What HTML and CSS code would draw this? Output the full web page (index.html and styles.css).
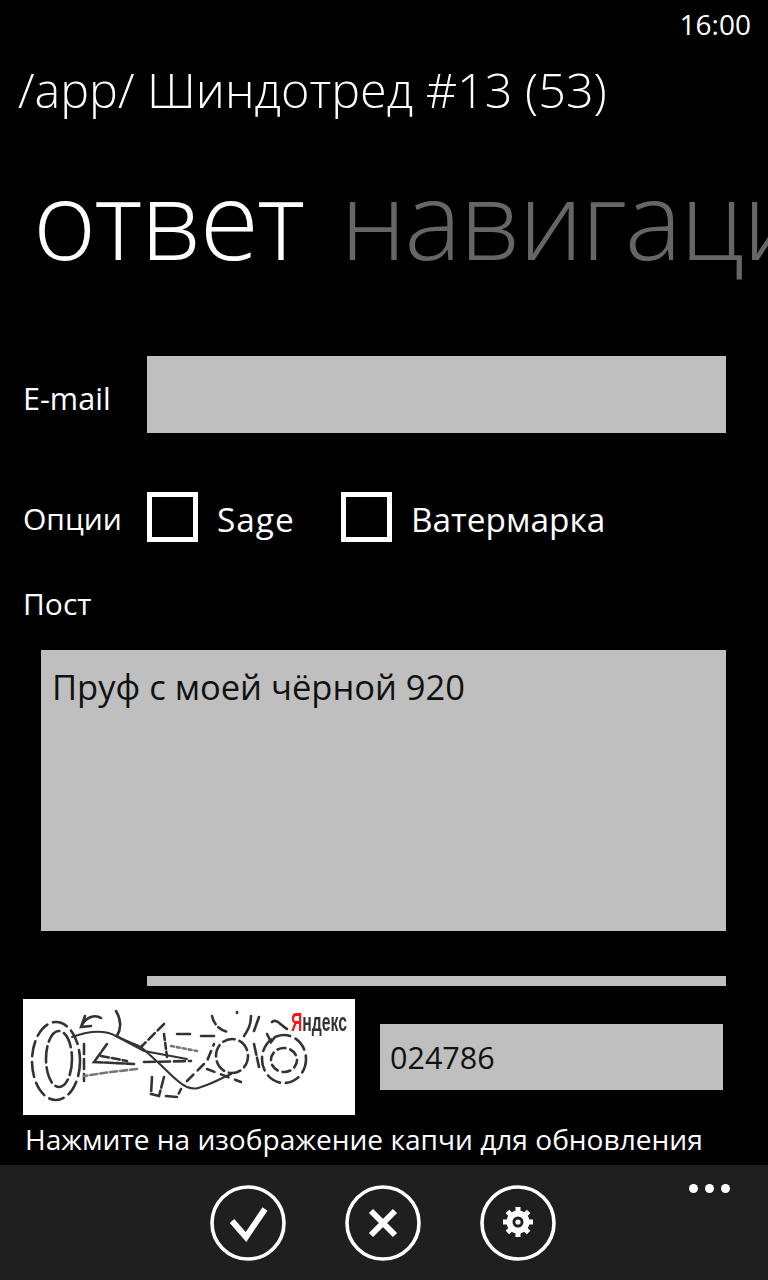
FILE: index.html
```html
<!DOCTYPE html>
<html lang="ru">
<head>
<meta charset="utf-8">
<title>Ответ</title>
<link rel="stylesheet" href="styles.css">
</head>
<body>
<div class="screen">
  <div class="status">16:00</div>
  <h1 class="title">/app/ Шиндотред #13 (53)</h1>
  <div class="pivot"><span class="pivot-on">ответ</span><span class="pivot-off">навигация</span></div>
  <div class="row row-email">
    <label class="label label-email">E-mail</label>
    <div class="input input-email"></div>
  </div>
  <div class="row row-options">
    <span class="label label-options">Опции</span>
    <span class="check"></span><span class="label check-text check-text-sage">Sage</span>
    <span class="check"></span><span class="label check-text">Ватермарка</span>
  </div>
  <div class="label label-post">Пост</div>
  <div class="input textarea">Пруф с моей чёрной 920</div>
  <div class="sliver"></div>
  <div class="row row-captcha">
    <div class="captcha">
      <svg class="captcha-art" width="332" height="116" viewBox="0 0 332 116">
        <g fill="none" stroke="#333" stroke-width="2.6" stroke-linecap="round">
          <ellipse cx="33" cy="62" rx="24" ry="39" stroke-dasharray="15 6"/>
          <ellipse cx="36" cy="60" rx="13" ry="28" stroke-dasharray="16 5"/>
          <path d="M58 28C62 18 72 15 78 19M62 17L58 28L68 27"/>
          <path d="M93 12C99 22 98 30 94 37"/>
          <path d="M49 38C63 33 80 30 93 37C105 43 112 45 118 48C127 56 136 64 144 72C150 78 157 85 164 88C172 91 176 89 181 87C190 84 199 79 208 75" stroke-width="2.1"/>
          <path d="M93 37L121 52L164 60" stroke-width="2"/>
          <path d="M61 45V82" stroke-dasharray="10 5"/>
          <path d="M84 45L71 63L111 65" stroke-dasharray="9 2"/>
          <path d="M114 70L88 73L61 77" stroke-dasharray="7 3" stroke="#777"/>
          <path d="M78 57L104 62" stroke-dasharray="8 3"/>
          <path d="M141 25L118 48" stroke-dasharray="9 4"/>
          <path d="M141 35L144 58" stroke-dasharray="6 3"/>
          <path d="M154 35H167M178 37H191"/>
          <path d="M148 47L174 52" stroke-dasharray="3 3" stroke="#777"/>
          <path d="M121 63L168 62" stroke-dasharray="11 4"/>
          <path d="M129 78L128 95L136 97L141 78" stroke-dasharray="14 3"/>
          <path d="M143 97L154 98L158 90" stroke-dasharray="11 4"/>
          <path d="M164 82L184 62L191 45" stroke-dasharray="9 6"/>
          <ellipse cx="209" cy="57" rx="16" ry="17" stroke-dasharray="12 5"/>
          <path d="M184 70L218 83" stroke-dasharray="8 7"/>
          <path d="M231 45L236 68" stroke-dasharray="11 3"/>
          <path d="M189 17C191 26 197 31 205 33" stroke-dasharray="9 4"/>
          <path d="M214 13V14"/>
          <path d="M228 17C228 26 225 31 221 37"/>
          <path d="M236 18L231 32"/>
          <path d="M249 23C254 19 258 27 264 30"/>
          <path d="M244 35L248 43L252 38"/>
          <ellipse cx="261" cy="60" rx="22" ry="24" stroke-dasharray="14 6"/>
          <ellipse cx="261" cy="61" rx="13" ry="12" stroke-dasharray="8 5"/>
        </g>
      </svg>
      <span class="yandex"><span class="yandex-y">Я</span>ндекс</span>
    </div>
    <div class="input input-captcha">024786</div>
  </div>
  <div class="label hint">Нажмите на изображение капчи для обновления</div>
  <div class="appbar">
    <span class="round">
      <svg width="76" height="76" viewBox="0 0 76 76"><circle cx="38" cy="38" r="36" fill="none" stroke="#fff" stroke-width="3.6"/><path d="M22 36L36 52L55 24" fill="none" stroke="#fff" stroke-width="6"/></svg>
    </span>
    <span class="round">
      <svg width="76" height="76" viewBox="0 0 76 76"><circle cx="38" cy="38" r="36" fill="none" stroke="#fff" stroke-width="3.6"/><path d="M26 26L50 50M50 26L26 50" fill="none" stroke="#fff" stroke-width="6"/></svg>
    </span>
    <span class="round">
      <svg width="76" height="76" viewBox="0 0 76 76"><circle cx="38" cy="38" r="36" fill="none" stroke="#fff" stroke-width="3.6"/><circle cx="38" cy="37" r="8.5" fill="none" stroke="#fff" stroke-width="6"/><circle cx="38" cy="37" r="2.6" fill="#fff"/><g stroke="#fff" stroke-width="5"><path d="M38 22V29M38 45V52M23 37H30M46 37H53M27.4 26.4L32.3 31.3M43.7 42.7L48.6 47.6M48.6 26.4L43.7 31.3M32.3 42.7L27.4 47.6"/></g></svg>
    </span>
    <span class="dots"><i></i><i></i><i></i></span>
  </div>
</div>
</body>
</html>
```

FILE: styles.css
```css
html, body {
  margin: 0;
  padding: 0;
  background: #000;
}
.screen {
  width: 768px;
  height: 1280px;
  overflow: hidden;
  position: relative;
  background: #000;
  color: #fff;
  font-family: "Open Sans", "Noto Sans", sans-serif;
}
.status {
  height: 50px;
  padding-right: 17px;
  text-align: right;
  font-size: 28px;
  line-height: 48px;
}
.title {
  margin: 0 0 0 18px;
  height: 80px;
  font-size: 48.5px;
  line-height: 78px;
  font-weight: 300;
  white-space: nowrap;
}
.pivot {
  height: 226px;
  padding-left: 33px;
  font-size: 108px;
  line-height: 178px;
  font-weight: 300;
  letter-spacing: -2px;
  white-space: nowrap;
  overflow: hidden;
}
.pivot-off {
  margin-left: 37px;
  color: #666;
}
.row {
  display: flex;
}
.label {
  font-size: 30px;
  white-space: nowrap;
}
.row .label {
  padding-top: 6px;
}
.row-options .label {
  padding-top: 3px;
}
.input {
  background: #bfbfbf;
  color: #111;
}
.row-email {
  align-items: center;
  height: 77px;
}
.label-email {
  width: 124px;
  margin-left: 23px;
  font-size: 30.6px;
}
.input-email {
  width: 579px;
  height: 77px;
}
.row-options {
  align-items: center;
  margin-top: 59px;
  height: 50px;
}
.label-options {
  width: 124px;
  margin-left: 23px;
}
.row-options .check-text {
  margin-left: 19px;
  font-size: 33.4px;
}
.check {
  box-sizing: border-box;
  flex: none;
  width: 51px;
  height: 50px;
  border: 5px solid #fff;
}
.row-options .check-text-sage {
  width: 124px;
  letter-spacing: 1px;
}
.label-post {
  margin: 39px 0 0 23px;
  height: 69px;
  line-height: 46px;
}
.textarea {
  box-sizing: border-box;
  width: 685px;
  height: 281px;
  margin-left: 41px;
  padding: 15px 11px;
  font-size: 34.5px;
  line-height: 44px;
}
.sliver {
  width: 579px;
  height: 10px;
  margin: 45px 0 0 147px;
  background: #bfbfbf;
}
.row-captcha {
  align-items: center;
  margin-top: 13px;
  margin-left: 23px;
}
.captcha {
  flex: none;
  position: relative;
  width: 332px;
  height: 116px;
  background: #fff;
}
.captcha-art {
  display: block;
  filter: blur(0.5px);
}
.yandex {
  position: absolute;
  top: 8px;
  right: 8px;
  font-family: "Liberation Sans", sans-serif;
  font-size: 25px;
  line-height: 30px;
  font-weight: 700;
  color: #333;
  transform: scaleX(0.63);
  transform-origin: right center;
}
.yandex-y {
  color: #f01a1a;
}
.input-captcha {
  box-sizing: border-box;
  width: 343px;
  height: 66px;
  margin-left: 25px;
  padding-left: 10px;
  font-size: 30.5px;
  line-height: 66px;
}
.hint {
  margin: 2px 0 0 25px;
  font-size: 28.1px;
  line-height: 44px;
}
.appbar {
  position: absolute;
  left: 0;
  right: 0;
  bottom: 0;
  height: 115px;
  box-sizing: border-box;
  padding: 20px 0 0 210px;
  display: flex;
  gap: 59px;
  background: #1f1f1f;
}
.round {
  width: 76px;
  height: 76px;
}
.round svg {
  display: block;
}
.dots {
  position: absolute;
  top: 19px;
  right: 38px;
  display: flex;
  gap: 7px;
}
.dots i {
  display: block;
  width: 9px;
  height: 9px;
  border-radius: 50%;
  background: #fff;
}
```
